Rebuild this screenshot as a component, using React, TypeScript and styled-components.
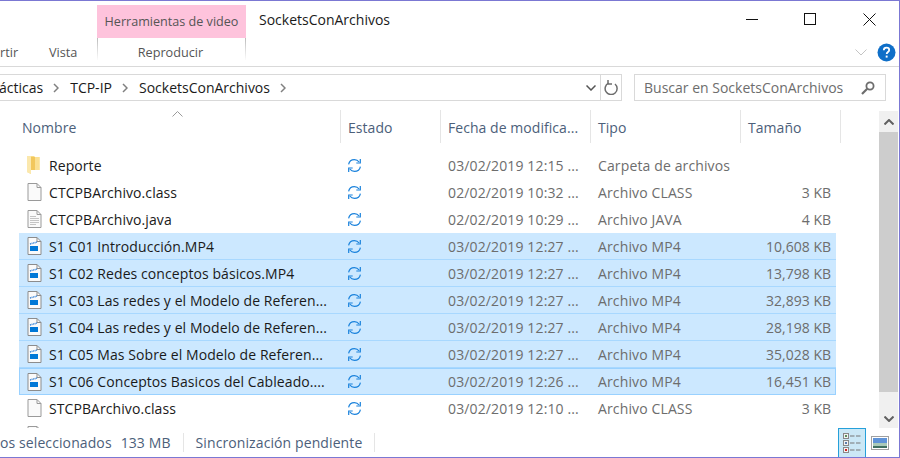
import React from 'react';
import styled, { createGlobalStyle } from 'styled-components';

const GlobalStyle = createGlobalStyle`
  html, body {
    margin: 0;
    padding: 0;
    background: #fff;
    overflow: hidden;
  }

  * {
    box-sizing: border-box;
  }
`;

const Window = styled.div`
  width: 900px;
  height: 458px;
  display: flex;
  flex-direction: column;
  background: #fff;
  border-top: 1px solid #7b78d3;
  border-right: 1px solid #7b78d3;
  border-bottom: 1px solid #7b78d3;
  font-family: "Open Sans", "Noto Sans", sans-serif;
  font-size: 14px;
  color: #1a1a1a;
  overflow: hidden;
`;

const TitleBar = styled.div`
  height: 37px;
  display: flex;
  flex: none;
`;

const ContextTitle = styled.div`
  width: 149px;
  height: 33px;
  margin: 4px 0 0 97px;
  background: #fec3dc;
  color: #555;
  font-size: 12.6px;
  display: flex;
  align-items: center;
  justify-content: center;
`;

const WindowTitle = styled.div`
  margin-left: 13px;
  height: 37px;
  line-height: 37px;
  font-size: 14px;
`;

const WindowButtons = styled.div`
  margin-left: auto;
  display: flex;
  height: 37px;
  padding-right: 23px;
  gap: 46px;
  align-items: center;
`;

const RibbonTabs = styled.div`
  height: 29px;
  flex: none;
  display: flex;
  align-items: center;
  border-bottom: 1px solid #d9d9d9;
`;

const RibbonTab = styled.div<{ $width: number }>`
  width: ${({ $width }) => $width}px;
  color: #555;
  font-size: 12.7px;
`;

const PlayTab = styled.div`
  width: 149px;
  height: 22px;
  margin-top: -6px;
  padding: 5px 2px 0 0;
  line-height: 18px;
  text-align: center;
  color: #555;
  font-size: 12.7px;
  border-left: 1px solid #c8c8c8;
  border-right: 1px solid #c8c8c8;
  border-image: linear-gradient(#b8b8b8, #fff) 1;
`;

const RibbonEnd = styled.div`
  margin-left: auto;
  display: flex;
  align-items: center;
  gap: 10px;
  padding-right: 3px;
`;

const NavBar = styled.div`
  height: 27px;
  margin-top: 7px;
  flex: none;
  display: flex;
  padding-right: 13px;
`;

const AddressBox = styled.div`
  width: 623px;
  margin-left: -1px;
  display: flex;
  align-items: center;
  border: 1px solid #d9d9d9;
  border-left: none;
`;

const Crumb = styled.span`
  color: #1a1a1a;
  font-size: 14px;
  white-space: nowrap;
`;

const CrumbArrow = styled.svg`
  margin: 0 11px 0 10px;
  flex: none;
`;

const AddressActions = styled.div`
  margin-left: auto;
  height: 100%;
  display: flex;
  align-items: center;
`;

const RefreshButton = styled.div`
  width: 21px;
  height: 100%;
  margin-left: 4px;
  border-left: 1px solid #d9d9d9;
  display: flex;
  align-items: center;
  justify-content: center;
`;

const SearchBox = styled.div`
  width: 252px;
  margin-left: 12px;
  display: flex;
  align-items: center;
  justify-content: space-between;
  padding: 0 10px 0 9px;
  border: 1px solid #d9d9d9;
  color: #6d6d6d;
  font-size: 14px;
  white-space: nowrap;
`;

const Content = styled.div`
  height: 319px;
  margin-top: 8px;
  flex: none;
  display: flex;
`;

const ListPane = styled.div`
  width: 879px;
  flex: none;
  overflow: hidden;
`;

const Header = styled.div`
  position: relative;
  height: 33px;
  margin-left: 14px;
  margin-top: 1px;
  margin-bottom: 9px;
  display: flex;
`;

const HeaderCell = styled.div<{ $width: number }>`
  width: ${({ $width }) => $width}px;
  flex: none;
  padding-left: ${({ $width }) => ($width > 200 ? 8 : 7)}px;
  border-right: 1px solid #e5e5e5;
  color: #4c607a;
  font-size: 14px;
  letter-spacing: 0.05px;
  line-height: 35px;
`;

const SortCaret = styled.svg`
  position: absolute;
  left: 158px;
  top: 1px;
`;

const Row = styled.div<{ $selected?: boolean; $focused?: boolean }>`
  width: 817px;
  height: 27px;
  margin-left: 19px;
  display: grid;
  grid-template-columns: 22px 298px 101px 150px 142px 91px;
  align-items: center;
  padding: 0 5px 0 8px;
  background: ${({ $selected }) => ($selected ? '#cce8ff' : 'transparent')};
  border-bottom: 1px solid ${({ $selected }) => ($selected ? '#a8d8ff' : 'transparent')};
  ${({ $focused }) => $focused && 'border: 1px solid #99d1ff; padding-left: 7px; padding-right: 4px;'}
`;

const NameText = styled.span`
  color: #1a1a1a;
  font-size: 14px;
  letter-spacing: 0.08px;
  white-space: nowrap;
`;

const MutedText = styled.span`
  color: #6d6d6d;
  font-size: 14px;
  letter-spacing: 0.13px;
  white-space: nowrap;
`;

const SizeText = styled(MutedText)`
  text-align: right;
  letter-spacing: 0;
`;

const ScrollBar = styled.div`
  width: 19px;
  flex: none;
  height: 317px;
  margin-top: 2px;
  display: flex;
  flex-direction: column;
  background: #f0f0f0;
`;

const ScrollButton = styled.div`
  height: 21px;
  flex: none;
  display: flex;
  align-items: center;
  justify-content: center;
`;

const ScrollThumb = styled.div`
  height: 260px;
  flex: none;
  background: #cdcdcd;
`;

const ScrollRest = styled.div`
  flex: 1;
  display: flex;
  align-items: flex-end;
  justify-content: center;
  padding-bottom: 6px;
`;

const StatusBar = styled.div`
  flex: 1;
  display: flex;
  align-items: center;
  color: #4c607a;
  font-size: 14px;
  letter-spacing: 0.1px;
  white-space: nowrap;
`;

const StatusSize = styled.span`
  margin-left: 9px;
`;

const StatusSync = styled.span`
  margin-left: 12px;
  padding-left: 12px;
  padding-right: 12px;
  border-left: 1px solid #e5e5e5;
  border-right: 1px solid #e5e5e5;
`;

const ViewButtons = styled.div`
  margin-left: auto;
  height: 100%;
  display: flex;
  align-items: center;
  padding-right: 10px;
`;

const ViewButton = styled.div<{ $active?: boolean }>`
  width: 28px;
  height: 100%;
  margin-right: 5px;
  display: flex;
  align-items: center;
  justify-content: center;
  background: ${({ $active }) => ($active ? '#cbe8f6' : 'transparent')};
  border: 1px solid ${({ $active }) => ($active ? '#26a0da' : 'transparent')};
  border-bottom: none;
`;

const SyncIcon = () => (
  <svg width="15" height="15" viewBox="0 0 15 15" fill="none" stroke="#1a82dc" strokeWidth="1.2">
    <path d="M1.600 6.400C2.200 3.400 4.600 1.600 7.400 1.600c2 0 3.600.9 4.700 2.400" />
    <path d="M13.400 8.600c-.6 3-3 4.800-5.900 4.800-2 0-3.600-.9-4.700-2.400" />
    <path d="M13.300 1v4h-4" />
    <path d="M1.700 14v-4h4" />
  </svg>
);

const FolderIcon = () => (
  <svg width="13" height="18" viewBox="0 0 13 18">
    <path d="M0 0h7l1 1h4.500v13H4v4l-4-2z" fill="#f8dc8a" />
    <path d="M0 0h4v18l-4-2z" fill="#fbe8ad" />
    <path d="M4 1h4v13H4z" fill="#f2c75c" />
    <path d="M8 1h4.500v13H8z" fill="#fbe092" />
  </svg>
);

const BlankIcon = () => (
  <svg width="15" height="18" viewBox="0 0 15 18" fill="#fafafa" stroke="#9a9a9a">
    <path d="M1 .5h9l4 4v13H1z" />
    <path d="M10 .5v4h4" fill="none" />
  </svg>
);

const TextIcon = () => (
  <svg width="15" height="18" viewBox="0 0 15 18" fill="#fafafa" stroke="#9a9a9a">
    <path d="M1 .5h9l4 4v13H1z" />
    <path d="M10 .5v4h4" fill="none" />
    <path d="M3 6.500h6M3 8.500h9M3 10.500h9M3 12.500h9M3 14.500h6" stroke="#c4c4c4" fill="none" />
  </svg>
);

const VideoIcon = () => (
  <svg width="15" height="18" viewBox="0 0 15 18" fill="#fafafa" stroke="#8c8c8c">
    <path d="M1 .5h9l4 4v13H1z" />
    <path d="M10 .5v4h4" fill="none" />
    <path d="M3 7l7-2" stroke="#2f7fd6" strokeWidth="1.500" strokeDasharray="1 .6" fill="none" />
    <rect x="3" y="9" width="8" height="5" fill="#0078d7" stroke="none" />
  </svg>
);

const ICONS = {
  folder: <FolderIcon />,
  blank: <BlankIcon />,
  text: <TextIcon />,
  video: <VideoIcon />,
};

type FileRow = {
  name: string;
  date: string;
  type: string;
  size?: string;
  icon: keyof typeof ICONS;
  selected?: boolean;
  focused?: boolean;
};

const FILES: FileRow[] = [
  { name: 'Reporte', date: '03/02/2019 12:15 ...', type: 'Carpeta de archivos', icon: 'folder' },
  { name: 'CTCPBArchivo.class', date: '02/02/2019 10:32 ...', type: 'Archivo CLASS', size: '3 KB', icon: 'blank' },
  { name: 'CTCPBArchivo.java', date: '02/02/2019 10:29 ...', type: 'Archivo JAVA', size: '4 KB', icon: 'text' },
  { name: 'S1 C01 Introducción.MP4', date: '03/02/2019 12:27 ...', type: 'Archivo MP4', size: '10,608 KB', icon: 'video', selected: true },
  { name: 'S1 C02 Redes conceptos básicos.MP4', date: '03/02/2019 12:27 ...', type: 'Archivo MP4', size: '13,798 KB', icon: 'video', selected: true },
  { name: 'S1 C03 Las redes y el Modelo de Referen...', date: '03/02/2019 12:27 ...', type: 'Archivo MP4', size: '32,893 KB', icon: 'video', selected: true },
  { name: 'S1 C04 Las redes y el Modelo de Referen...', date: '03/02/2019 12:27 ...', type: 'Archivo MP4', size: '28,198 KB', icon: 'video', selected: true },
  { name: 'S1 C05 Mas Sobre el Modelo de Referen...', date: '03/02/2019 12:27 ...', type: 'Archivo MP4', size: '35,028 KB', icon: 'video', selected: true },
  { name: 'S1 C06 Conceptos Basicos del Cableado....', date: '03/02/2019 12:26 ...', type: 'Archivo MP4', size: '16,451 KB', icon: 'video', selected: true, focused: true },
  { name: 'STCPBArchivo.class', date: '03/02/2019 12:10 ...', type: 'Archivo CLASS', size: '3 KB', icon: 'blank' },
  { name: '', date: '', type: '', icon: 'blank' },
];

export default function App() {
  return (
    <Window>
      <GlobalStyle />
      <TitleBar>
        <ContextTitle>Herramientas de video</ContextTitle>
        <WindowTitle>SocketsConArchivos</WindowTitle>
        <WindowButtons>
          <svg width="12" height="12" viewBox="0 0 12 12" stroke="#111"><path d="M0 5.500h12" /></svg>
          <svg width="13" height="13" viewBox="0 0 13 13" fill="none" stroke="#111"><rect x=".5" y=".5" width="11" height="11" /></svg>
          <svg width="13" height="13" viewBox="0 0 13 13" stroke="#111"><path d="M.5.500l12 12M12.500.500l-12 12" /></svg>
        </WindowButtons>
      </TitleBar>

      <RibbonTabs>
        <RibbonTab $width={49}>rtir</RibbonTab>
        <RibbonTab $width={48}>Vista</RibbonTab>
        <PlayTab>Reproducir</PlayTab>
        <RibbonEnd>
          <svg width="12" height="7" viewBox="0 0 12 7" fill="none" stroke="#c4c4c4"><path d="M.5.500L6 6l5.500-5.500" /></svg>
          <svg width="19" height="19" viewBox="0 0 19 19">
            <circle cx="9.500" cy="9.500" r="9" fill="#0f6fc8" />
            <path d="M6.800 7.200c0-1.700 1.200-2.500 2.700-2.500s2.700.9 2.700 2.300c0 2-2.500 2-2.500 4" fill="none" stroke="#fff" strokeWidth="1.800" />
            <rect x="8.700" y="12.600" width="1.900" height="2" fill="#fff" />
          </svg>
        </RibbonEnd>
      </RibbonTabs>

      <NavBar>
        <AddressBox>
          <Crumb>ácticas</Crumb>
          <CrumbArrow width="6" height="10" viewBox="0 0 6 10" fill="none" stroke="#808080" strokeWidth="1.500"><path d="M1 1l4 4-4 4" /></CrumbArrow>
          <Crumb>TCP-IP</Crumb>
          <CrumbArrow width="6" height="10" viewBox="0 0 6 10" fill="none" stroke="#808080" strokeWidth="1.500"><path d="M1 1l4 4-4 4" /></CrumbArrow>
          <Crumb>SocketsConArchivos</Crumb>
          <CrumbArrow width="6" height="10" viewBox="0 0 6 10" fill="none" stroke="#808080" strokeWidth="1.500"><path d="M1 1l4 4-4 4" /></CrumbArrow>
          <AddressActions>
            <svg width="10" height="6" viewBox="0 0 10 6" fill="none" stroke="#555" strokeWidth="1.500"><path d="M.5.500L5 5 9.500.500" /></svg>
            <RefreshButton>
              <svg width="14" height="15" viewBox="0 0 14 15" fill="none" stroke="#6d6d6d" strokeWidth="1.500">
                <path d="M4.500 3.200A6 6 0 1 0 11 4" />
                <path d="M4 0v4h4" />
              </svg>
            </RefreshButton>
          </AddressActions>
        </AddressBox>
        <SearchBox>
          Buscar en SocketsConArchivos
          <svg width="14" height="14" viewBox="0 0 14 14" fill="none" stroke="#6d6d6d" strokeWidth="1.800">
            <circle cx="9" cy="5" r="3.600" />
            <path d="M6.200 7.800L1 13" strokeWidth="2.200" />
          </svg>
        </SearchBox>
      </NavBar>

      <Content>
        <ListPane>
          <Header>
            <SortCaret width="11" height="6" viewBox="0 0 11 6" fill="none" stroke="#9a9a9a"><path d="M.5 5.500l5-5 5 5" /></SortCaret>
            <HeaderCell $width={327}>Nombre</HeaderCell>
            <HeaderCell $width={100}>Estado</HeaderCell>
            <HeaderCell $width={150}>Fecha de modifica...</HeaderCell>
            <HeaderCell $width={150}>Tipo</HeaderCell>
            <HeaderCell $width={100}>Tamaño</HeaderCell>
          </Header>
          {FILES.map((file, i) => (
            <Row key={i} $selected={file.selected} $focused={file.focused}>
              {ICONS[file.icon]}
              <NameText>{file.name}</NameText>
              {file.name ? <SyncIcon /> : <span />}
              <MutedText>{file.date}</MutedText>
              <MutedText>{file.type}</MutedText>
              <SizeText>{file.size}</SizeText>
            </Row>
          ))}
        </ListPane>
        <ScrollBar>
          <ScrollButton>
            <svg width="10" height="6" viewBox="0 0 10 6" fill="none" stroke="#606060" strokeWidth="2"><path d="M.5 5.500L5 1l4.500 4.500" /></svg>
          </ScrollButton>
          <ScrollThumb />
          <ScrollRest>
            <svg width="10" height="6" viewBox="0 0 10 6" fill="none" stroke="#606060" strokeWidth="2"><path d="M.5.500L5 5 9.500.500" /></svg>
          </ScrollRest>
        </ScrollBar>
      </Content>

      <StatusBar>
        os seleccionados
        <StatusSize>133 MB</StatusSize>
        <StatusSync>Sincronización pendiente</StatusSync>
        <ViewButtons>
          <ViewButton $active>
            <svg width="18" height="20" viewBox="0 0 18 20">
              <rect x=".5" y=".5" width="5" height="5" fill="#f2f2f2" stroke="#888" />
              <rect x=".5" y="7.500" width="5" height="5" fill="#f2f2f2" stroke="#888" />
              <rect x=".5" y="14.500" width="5" height="5" fill="#f2f2f2" stroke="#888" />
              <rect x="2" y="2" width="2" height="2" fill="#5a8f5a" />
              <rect x="2" y="9" width="2" height="2" fill="#5a7fb0" />
              <rect x="2" y="16" width="2" height="2" fill="#d02020" />
              <path d="M7 3h11M7 10h11M7 17h11" stroke="#777" strokeDasharray="4.500 1.500" />
            </svg>
          </ViewButton>
          <svg width="18" height="14" viewBox="0 0 18 14">
            <rect x=".5" y=".5" width="17" height="13" fill="#fff" stroke="#a0a0a0" />
            <rect x="2" y="2" width="14" height="5" fill="#5f93d8" />
            <rect x="2" y="7" width="14" height="3" fill="#a9c9b8" />
            <rect x="2" y="10" width="14" height="2" fill="#3f6f60" />
          </svg>
        </ViewButtons>
      </StatusBar>
    </Window>
  );
}
